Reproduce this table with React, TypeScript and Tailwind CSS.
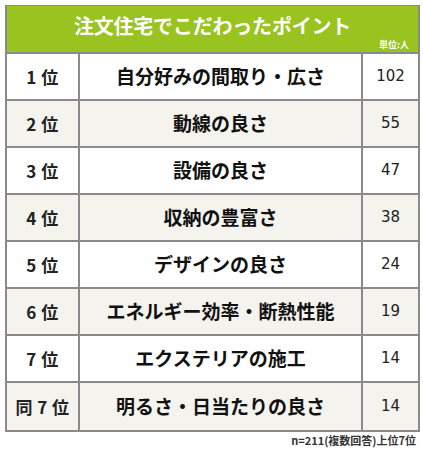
import React from "react";

const rows = [
  { rank: "1 位", item: "自分好みの間取り・広さ", n: "102" },
  { rank: "2 位", item: "動線の良さ", n: "55" },
  { rank: "3 位", item: "設備の良さ", n: "47" },
  { rank: "4 位", item: "収納の豊富さ", n: "38" },
  { rank: "5 位", item: "デザインの良さ", n: "24" },
  { rank: "6 位", item: "エネルギー効率・断熱性能", n: "19" },
  { rank: "7 位", item: "エクステリアの施工", n: "14" },
  { rank: "同 7 位", item: "明るさ・日当たりの良さ", n: "14" },
];

const jp = { fontFamily: '"Noto Sans CJK JP", "Noto Sans", sans-serif' };

export default function App() {
  return (
    <div className="w-[423px] h-[450px] bg-white relative" style={jp}>
      <div className="absolute left-[5px] top-[5px] w-[415px] border-2 border-[#8a8a8a] border-t-[1px]">
        <div className="h-[46px] bg-[#99c31f] relative flex items-center justify-center">
          <span className="text-white font-bold text-[20px] leading-none -mt-[6px] tracking-[-0.2px]">
            注文住宅でこだわったポイント
          </span>
          <span className="absolute right-[9px] bottom-[3px] text-white text-[9px] leading-none font-bold">
            単位:人
          </span>
        </div>
        {rows.map((r, i) => (
          <div
            key={i}
            className={`flex border-t-2 border-[#8a8a8a] ${i === 7 ? "h-[49px]" : "h-[47px]"} ${
              i % 2 === 1 ? "bg-[#f5f3ee]" : "bg-white"
            }`}
          >
            <div className="w-[73px] flex items-center justify-center font-bold text-[17px] text-[#222] tracking-[0.5px] border-r-2 border-[#8a8a8a]">
              {r.rank}
            </div>
            <div className="w-[283px] flex items-center justify-center font-bold text-[19px] text-[#111] border-r-2 border-[#8a8a8a]">
              {r.item}
            </div>
            <div
              className="flex-1 flex items-center justify-center text-[15px] text-[#222]"
              style={{ fontFamily: '"DejaVu Sans", sans-serif' }}
            >
              {r.n}
            </div>
          </div>
        ))}
      </div>
      <div className="absolute right-[7px] top-[435px] text-[11px] font-bold text-[#333] leading-none">
        n=211(複数回答)上位7位
      </div>
    </div>
  );
}
